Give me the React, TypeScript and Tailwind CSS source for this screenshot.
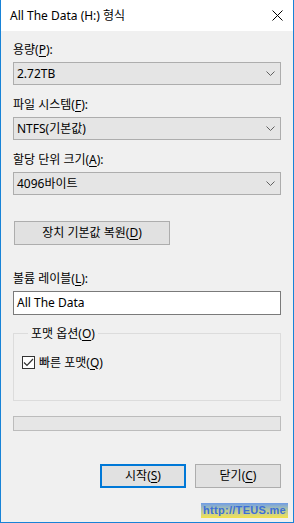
import React from "react";

const font = "font-['Noto_Sans','Noto_Sans_CJK_KR',sans-serif]";

function Chevron() {
  return (
    <svg width="9" height="5" viewBox="0 0 9 5" className="shrink-0">
      <path d="M0.5 0.5 L4.5 4.5 L8.5 0.5" fill="none" stroke="#606060" strokeWidth="1" />
    </svg>
  );
}

function Label({ text, k, mt }: { text: string; k: string; mt: string }) {
  return (
    <div className={`${mt} h-[15px] leading-[15px] text-[12px] text-black`}>
      {text}(<u className="underline-offset-2">{k}</u>):
    </div>
  );
}

function Select({ value }: { value: string }) {
  return (
    <div className="mt-[5px] h-[23px] w-[268px] flex items-center justify-between border border-[#adadad] bg-[#e5e5e5] pl-[3px] pr-[5px] text-[12px] text-black">
      <span>{value}</span>
      <Chevron />
    </div>
  );
}

export default function App() {
  return (
    <div className={`${font} w-[294px] h-[523px] flex flex-col border-x border-b border-[#1883d7] bg-[#f0f0f0] overflow-hidden`}>
      {/* 제목 표시줄 */}
      <div className="h-[31px] shrink-0 bg-white flex items-center justify-between pl-[9px]">
        <span className="text-[12px] text-black">All The Data (H:) 형식</span>
        <svg width="11" height="11" viewBox="0 0 11 11" className="mr-[10px]">
          <path d="M0.5 0.5 L10.5 10.5 M10.5 0.5 L0.5 10.5" stroke="#000" strokeWidth="1" />
        </svg>
      </div>

      <div className="flex-1 flex flex-col px-[12px] pt-[11px]">
        <Label text="용량" k="P" mt="mt-0" />
        <Select value="2.72TB" />

        <Label text="파일 시스템" k="F" mt="mt-[12px]" />
        <Select value="NTFS(기본값)" />

        <Label text="할당 단위 크기" k="A" mt="mt-[12px]" />
        <Select value="4096바이트" />

        <button className="mt-[26px] ml-px h-[24px] w-[156px] border border-[#adadad] bg-[#e1e1e1] text-[12px] text-black">
          장치 기본값 복원(<u className="underline-offset-2">D</u>)
        </button>

        <Label text="볼륨 레이블" k="L" mt="mt-[26px]" />
        <div className="mt-[5px] h-[24px] w-[268px] flex items-center border border-[#7a7a7a] bg-white pl-[3px] text-[12px] text-black">
          All The Data
        </div>

        <fieldset className="mt-[11px] h-[75px] w-[268px] border border-[#dcdcdc] pl-[8px]">
          <legend className="ml-[6px] px-[3px] h-[15px] leading-[15px] text-[12px] text-black">
            포맷 옵션(<u className="underline-offset-2">O</u>)
          </legend>
          <label className="mt-[14px] flex items-center gap-[4px] h-[15px] text-[12px] text-black">
            <span className="w-[13px] h-[13px] border border-[#333333] bg-white flex items-center justify-center">
              <svg width="11" height="9" viewBox="0 0 11 9">
                <path d="M1 4.5 L4 7.5 L10 1" fill="none" stroke="#333333" strokeWidth="1.2" />
              </svg>
            </span>
            <span>
              빠른 포맷(<u className="underline-offset-2">Q</u>)
            </span>
          </label>
        </fieldset>

        <div className="mt-[15px] h-[15px] w-[268px] border border-[#bcbcbc] bg-[#e6e6e6]" />

        <div className="mt-[33px] flex justify-end gap-[9px]">
          <button className="h-[24px] w-[86px] border-2 border-[#0078d7] bg-[#e1e1e1] text-[12px] text-black">
            시작(<u className="underline-offset-2">S</u>)
          </button>
          <button className="h-[24px] w-[86px] border border-[#adadad] bg-[#e1e1e1] text-[12px] text-black">
            닫기(<u className="underline-offset-2">C</u>)
          </button>
        </div>

        <div className="mt-[15px] self-end -mr-[7px] h-[15px] w-[87px] flex items-center justify-center bg-gradient-to-b from-[#6f9be6] via-[#b9c99a] to-[#f4e247] font-['Liberation_Sans',sans-serif] text-[11px] font-bold text-[#3c6fd8] tracking-[0.3px] leading-none">
          http://TEUS.me
        </div>
      </div>
    </div>
  );
}
